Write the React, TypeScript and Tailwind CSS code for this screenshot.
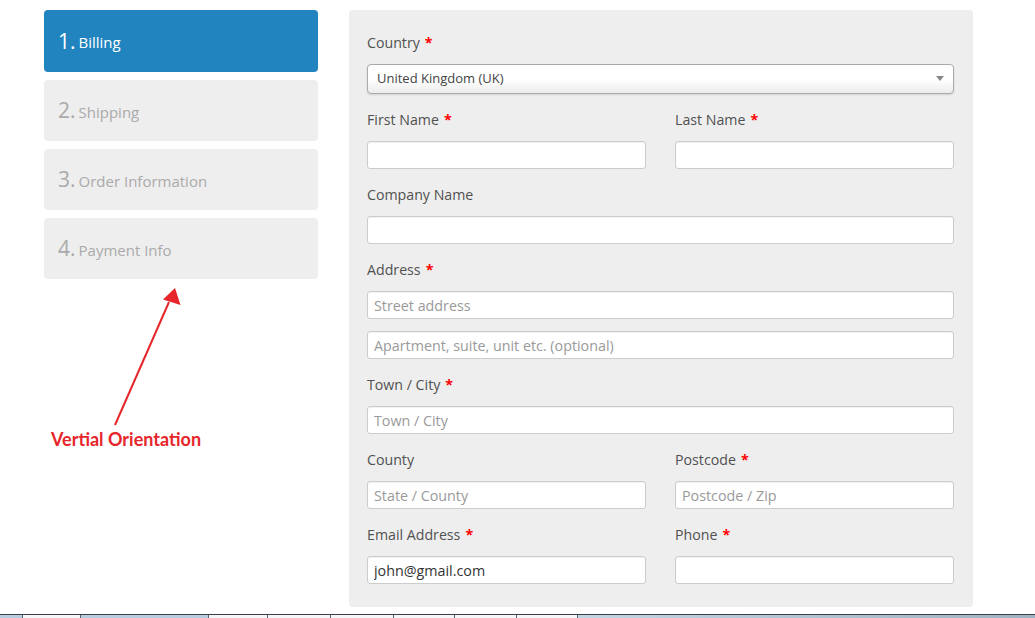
import React from 'react';

const STEPS = [
  { n: '1.', label: 'Billing' },
  { n: '2.', label: 'Shipping' },
  { n: '3.', label: 'Order Information' },
  { n: '4.', label: 'Payment Info' },
];

const TASKBAR = [
  { w: 'w-[23px]', tab: false },
  { w: 'w-[58px]', tab: true },
  { w: 'w-[128px]', tab: false },
  { w: 'w-[59px]', tab: true },
  { w: 'w-[63px]', tab: true },
  { w: 'w-[63px]', tab: true },
  { w: 'w-[61px]', tab: true },
  { w: 'w-[62px]', tab: true },
  { w: 'w-[61px]', tab: true },
];

function Label({ text, required }: { text: string; required?: boolean }) {
  return (
    <div className="h-5 leading-5 mb-[11px] text-[14.2px] text-[#515151]">
      {text}
      {required && <span className="ml-[5px] font-bold text-[#ff0000]">*</span>}
    </div>
  );
}

function Field({ placeholder, value }: { placeholder?: string; value?: string }) {
  return (
    <input
      readOnly
      defaultValue={value}
      placeholder={placeholder}
      className="block w-full h-[28px] px-[6px] bg-white border border-[#cccccc] rounded-[3px] shadow-[inset_0_1px_1px_rgba(0,0,0,0.06)] text-[14.3px] text-[#333] placeholder:text-[#9a9a9a] outline-none"
    />
  );
}

export default function App() {
  return (
    <div className="h-[618px] flex flex-col bg-white overflow-hidden" style={{ fontFamily: '"Open Sans", "Noto Sans", sans-serif' }}>
      <div className="flex gap-[31px] pl-[44px] pt-[10px]">
        {/* Steps */}
        <div className="w-[274px] flex flex-col">
          <div className="flex flex-col gap-[8px]">
            {STEPS.map((s, i) => (
              <div
                key={s.n}
                className={`rounded-[4px] flex items-center pl-[14px] ${
                  i === 0 ? 'h-[62px] bg-[#2184be] text-white' : 'h-[61px] bg-[#eeeeee] text-[#aaaaaa]'
                }`}
              >
                <span className="text-[21px] leading-none mr-[3px]">{s.n}</span>
                <span className="text-[15px] leading-none mt-[3px]">{s.label}</span>
              </div>
            ))}
          </div>
          <svg width="274" height="146" viewBox="0 0 274 146" className="mt-[4px] block">
            <line x1="71" y1="142" x2="125" y2="19" stroke="#e6262b" strokeWidth="2" />
            <polygon points="131,5 136.5,22 119,16.5" fill="#e6262b" />
          </svg>
          <div
            className="pl-[7px] text-[18px] font-bold text-[#e6262b] leading-5"
            style={{ fontFamily: 'Lato, "Open Sans", sans-serif' }}
          >
            Vertial Orientation
          </div>
        </div>

        {/* Billing form */}
        <div className="w-[624px] bg-[#eeeeee] rounded-[4px] pl-[18px] pr-[19px] pt-[23px] pb-[23px] flex flex-col gap-4">
          <div>
            <Label text="Country" required />
            <div className="relative h-[30px] rounded-[4px] border border-[#aaaaaa] bg-gradient-to-b from-white from-50% to-[#ececec] shadow-[0_1px_2px_rgba(0,0,0,0.12)] flex items-center pl-[9px] text-[13px] text-[#444]">
              United Kingdom (UK)
              <span className="absolute right-[9px] top-[11px] w-0 h-0 border-l-[4px] border-r-[4px] border-t-[5px] border-l-transparent border-r-transparent border-t-[#888]" />
            </div>
          </div>

          <div className="grid grid-cols-2 gap-x-[29px]">
            <div>
              <Label text="First Name" required />
              <Field />
            </div>
            <div>
              <Label text="Last Name" required />
              <Field />
            </div>
          </div>

          <div>
            <Label text="Company Name" />
            <Field />
          </div>

          <div>
            <Label text="Address" required />
            <div className="flex flex-col gap-3">
              <Field placeholder="Street address" />
              <Field placeholder="Apartment, suite, unit etc. (optional)" />
            </div>
          </div>

          <div>
            <Label text="Town / City" required />
            <Field placeholder="Town / City" />
          </div>

          <div className="grid grid-cols-2 gap-x-[29px]">
            <div>
              <Label text="County" />
              <Field placeholder="State / County" />
            </div>
            <div>
              <Label text="Postcode" required />
              <Field placeholder="Postcode / Zip" />
            </div>
          </div>

          <div className="grid grid-cols-2 gap-x-[29px]">
            <div>
              <Label text="Email Address" required />
              <Field value="john@gmail.com" />
            </div>
            <div>
              <Label text="Phone" required />
              <Field />
            </div>
          </div>
        </div>
      </div>

      {/* taskbar sliver */}
      <div className="mt-auto h-[4px] flex border-t border-[#3a3f48] bg-gradient-to-r from-[#b9cfe0] via-[#c9dae8] to-[#9fb3c4]">
        {TASKBAR.map((t, i) => (
          <div key={i} className={`${t.w} h-full border-r border-[#5a6470] ${t.tab ? 'bg-[#f4f6f8]' : 'bg-[#b8cde0]'}`} />
        ))}
      </div>
    </div>
  );
}
